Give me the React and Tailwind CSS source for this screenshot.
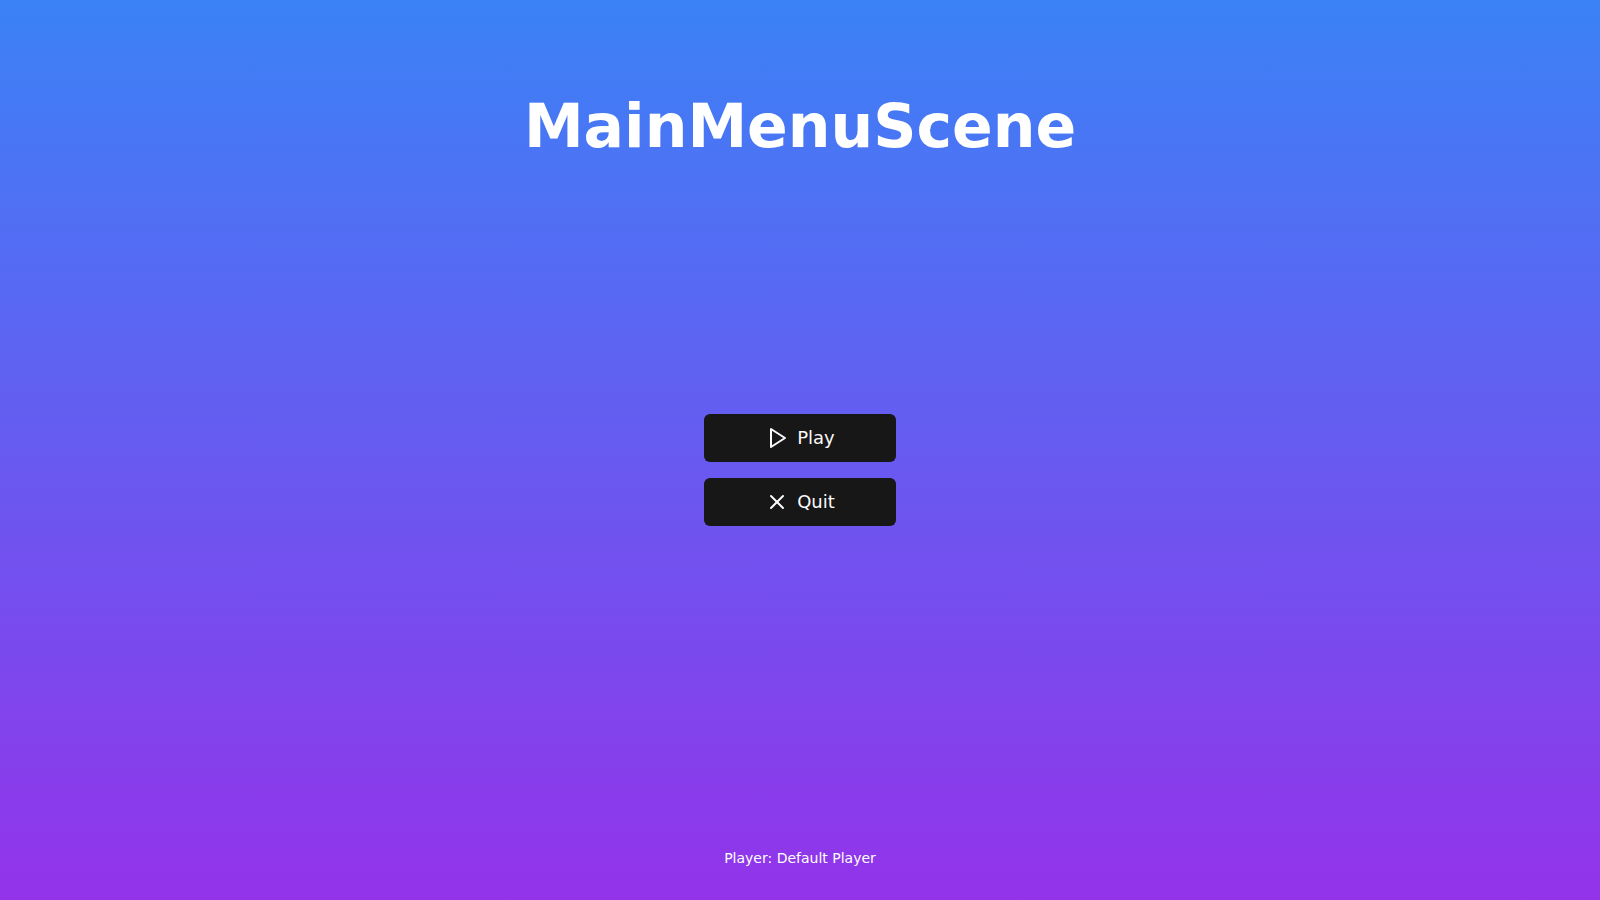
import { X } from "lucide-react";

function PlayIcon(props) {
  return (
    <svg
      viewBox="0 0 24 24"
      fill="none"
      stroke="currentColor"
      strokeWidth="2"
      strokeLinecap="round"
      strokeLinejoin="round"
      {...props}
    >
      <polygon points="6 3 20 12 6 21 6 3" />
    </svg>
  );
}

function MenuButton({ icon: Icon, children }) {
  return (
    <button
      type="button"
      className="flex h-12 w-48 items-center justify-center rounded-md bg-[#171717] px-8 text-lg text-neutral-50 hover:bg-neutral-800"
    >
      <Icon className="mr-2 size-6" aria-hidden="true" />
      {children}
    </button>
  );
}

export default function App() {
  return (
    <main className="flex min-h-screen flex-col items-center justify-between bg-linear-to-b/srgb from-[#3b82f6] to-[#9333ea] p-8 font-['DejaVu_Sans',sans-serif] text-white">
      <h1 className="mt-16 text-6xl font-bold">MainMenuScene</h1>
      <nav className="mb-16 flex flex-col gap-4">
        <MenuButton icon={PlayIcon}>Play</MenuButton>
        <MenuButton icon={X}>Quit</MenuButton>
      </nav>
      <p className="text-sm">Player: Default Player</p>
    </main>
  );
}
